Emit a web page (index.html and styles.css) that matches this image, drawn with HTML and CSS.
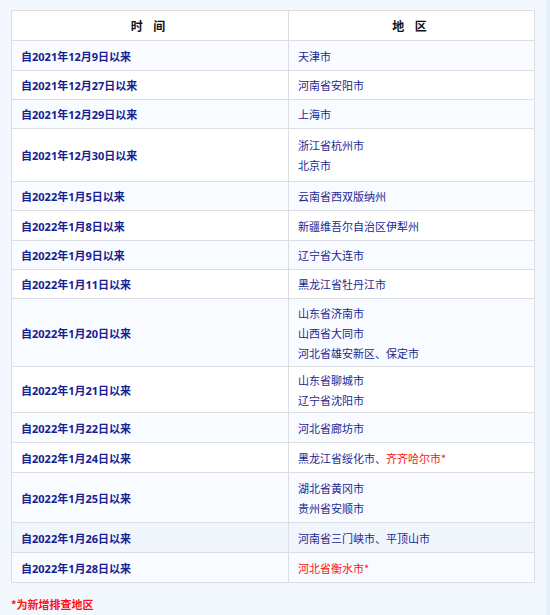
FILE: index.html
```html
<!DOCTYPE html>
<html lang="zh-CN">
<head>
<meta charset="utf-8">
<title>排查地区</title>
<link rel="stylesheet" href="styles.css">
</head>
<body>
<div class="page">
  <table class="areas">
    <colgroup><col class="col-time"><col class="col-area"></colgroup>
    <thead>
      <tr class="h30"><th>时 间</th><th>地 区</th></tr>
    </thead>
    <tbody>
      <tr class="h30"><td class="time">自2021年12月9日以来</td><td class="area">天津市</td></tr>
      <tr class="h29"><td class="time">自2021年12月27日以来</td><td class="area">河南省安阳市</td></tr>
      <tr class="h29"><td class="time">自2021年12月29日以来</td><td class="area">上海市</td></tr>
      <tr class="h53"><td class="time">自2021年12月30日以来</td><td class="area"><div class="line">浙江省杭州市</div><div class="line">北京市</div></td></tr>
      <tr class="h29"><td class="time">自2022年1月5日以来</td><td class="area">云南省西双版纳州</td></tr>
      <tr class="h30"><td class="time">自2022年1月8日以来</td><td class="area">新疆维吾尔自治区伊犁州</td></tr>
      <tr class="h29"><td class="time">自2022年1月9日以来</td><td class="area">辽宁省大连市</td></tr>
      <tr class="h29"><td class="time">自2022年1月11日以来</td><td class="area">黑龙江省牡丹江市</td></tr>
      <tr class="h68"><td class="time">自2022年1月20日以来</td><td class="area"><div class="line">山东省济南市</div><div class="line">山西省大同市</div><div class="line">河北省雄安新区、保定市</div></td></tr>
      <tr class="h46"><td class="time">自2022年1月21日以来</td><td class="area"><div class="line">山东省聊城市</div><div class="line">辽宁省沈阳市</div></td></tr>
      <tr class="h30"><td class="time">自2022年1月22日以来</td><td class="area">河北省廊坊市</td></tr>
      <tr class="h30"><td class="time">自2022年1月24日以来</td><td class="area">黑龙江省绥化市、<span class="new">齐齐哈尔市*</span></td></tr>
      <tr class="h50"><td class="time">自2022年1月25日以来</td><td class="area"><div class="line">湖北省黄冈市</div><div class="line">贵州省安顺市</div></td></tr>
      <tr class="h30 hover"><td class="time">自2022年1月26日以来</td><td class="area">河南省三门峡市、平顶山市</td></tr>
      <tr class="h30"><td class="time">自2022年1月28日以来</td><td class="area"><span class="new">河北省衡水市*</span></td></tr>
    </tbody>
  </table>
  <p class="note">*为新增排查地区</p>
</div>
</body>
</html>
```

FILE: styles.css
```css
html {
  background: #e6f1fc;
}
body {
  margin: 0;
  width: 546px;
  min-height: 615px;
  background: #f3f8ff;
  font-family: "Noto Sans CJK SC", "Noto Sans", sans-serif;
}
.page {
  padding: 10px 0 0 11px;
}
.areas {
  border-collapse: collapse;
  width: 523px;
  table-layout: fixed;
  font-size: 11px;
  background: #ffffff;
}
.col-time { width: 277px; }
.col-area { width: 246px; }
.areas th,
.areas td {
  border: 1px solid #dcdee3;
  padding: 0 9px;
  vertical-align: middle;
  text-align: left;
}
.areas th {
  text-align: center;
  font-size: 12px;
  font-weight: bold;
  color: #111111;
  letter-spacing: 4px;
  background: #ffffff;
}
.areas tbody tr:nth-child(odd) { background: #f8fbff; }
.areas tbody tr:nth-child(even) { background: #ffffff; }
.areas tbody tr.hover { background: #f1f6fd; }
.time {
  font-family: "Noto Sans", "Noto Sans CJK SC", sans-serif;
  font-weight: bold;
  color: #16218f;
}
.area {
  color: #1a2894;
  line-height: 20px;
}
.line { line-height: 20px; }
.new { color: #ff1111; }
.h29 { height: 29px; }
.h30 { height: 30px; }
.h46 { height: 46px; }
.h50 { height: 50px; }
.h53 { height: 53px; }
.h68 { height: 68px; }
.note {
  margin: 13px 0 0 0;
  font-size: 11px;
  font-weight: bold;
  color: #ff1111;
}
```
